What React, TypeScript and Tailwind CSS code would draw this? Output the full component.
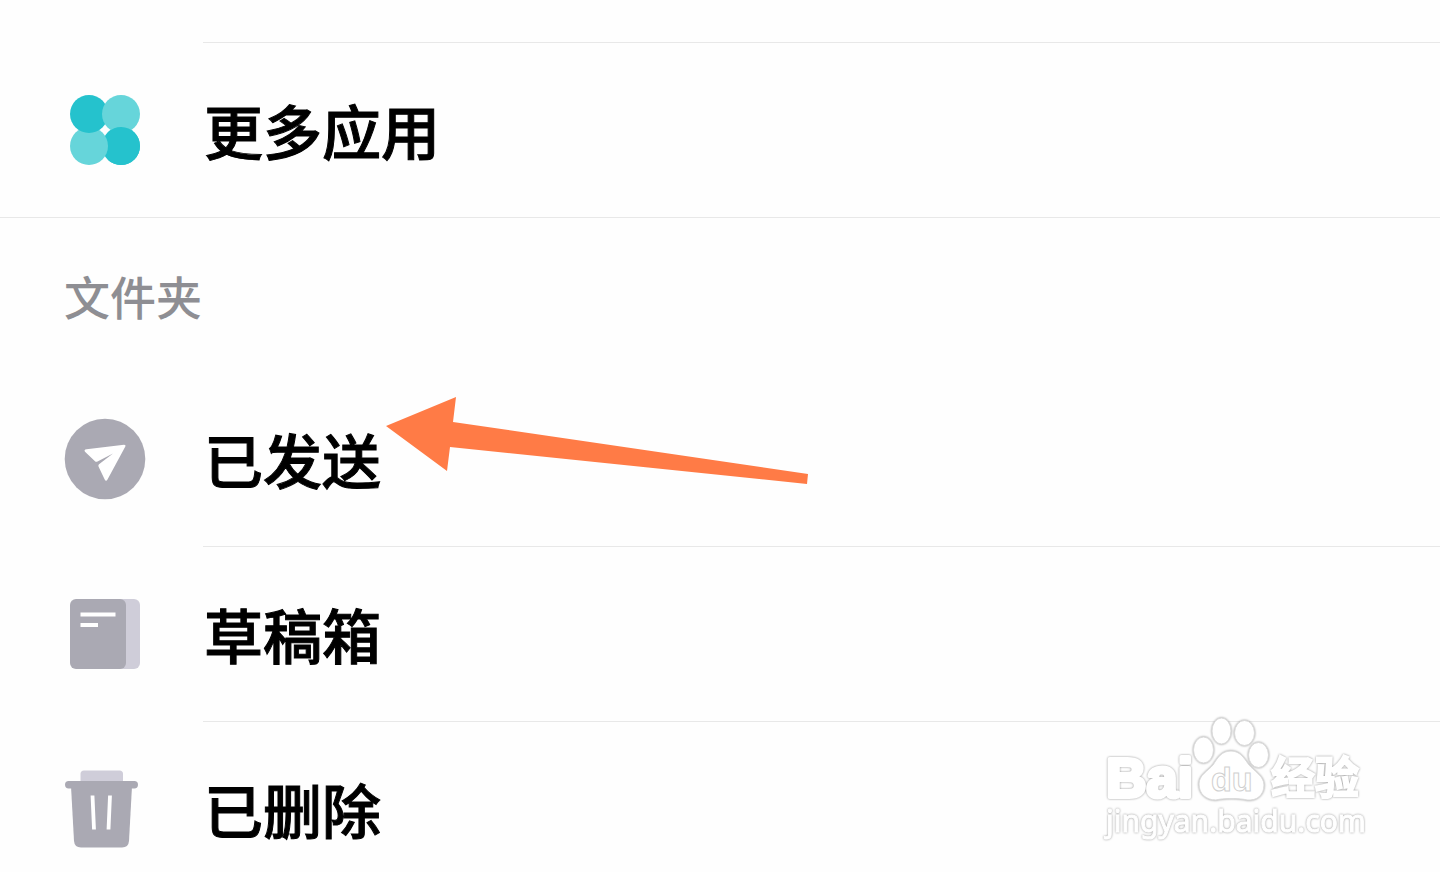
import type { ReactNode } from "react"

function AppsIcon() {
  return (
    <svg viewBox="0 0 82 82" className="size-[82px] shrink-0" aria-hidden="true">
      <circle cx="57" cy="57" r="19" fill="#25c2cd" />
      <circle cx="25" cy="57" r="19" fill="#66d5da" />
      <circle cx="25" cy="25" r="19" fill="#25c2cd" />
      <circle cx="57" cy="25" r="19" fill="#66d5da" />
      {/* right part again, so that each circle laps over the next one */}
      <path d="M44 43.100A19 19 0 1 1 44 70.900z" fill="#25c2cd" />
    </svg>
  )
}

function SentIcon() {
  return (
    <svg viewBox="0 0 82 82" className="size-[82px] shrink-0" aria-hidden="true">
      <circle cx="41" cy="41" r="40.300" fill="#aaa9b3" />
      <path
        d="M22.500 31.300 60 26.800q2.200 0 1.200 2L43.500 61.500q-1.500 2.500-2.800 0L34.500 48.500q-.5-1.200.5-2.200L49 35.500 33.500 43.500q-1.500.7-2.500-.3L21 33.800q-1.500-2 1.500-2.500z"
        fill="#fff"
      />
    </svg>
  )
}

function DraftsIcon() {
  return (
    <svg viewBox="0 0 82 82" className="size-[82px] shrink-0" aria-hidden="true">
      <rect x="30" y="6" width="46" height="70" rx="6" fill="#cfcdd9" />
      <rect x="6" y="6" width="56" height="70" rx="6" fill="#aaa9b3" />
      <path d="M16.500 21.500h35M16.500 32h17.500" stroke="#fff" strokeWidth="4" />
    </svg>
  )
}

function TrashIcon() {
  return (
    <svg viewBox="0 0 82 82" className="size-[82px] shrink-0" aria-hidden="true">
      <path d="M16.500 14V6q0-3.500 3.500-3.500h35.500q3.500 0 3.500 3.500v8z" fill="#cfcdd9" />
      <rect x="1" y="13" width="73" height="7.500" rx="3.700" fill="#aaa9b3" />
      <path d="M7 18h61l-3 55q-.5 6.500-7 6.500H17q-6.500 0-7-6.500z" fill="#aaa9b3" />
      <path d="M28.500 27.500 30 61.500M46 27.500 44.500 61.500" stroke="#fff" strokeWidth="3.800" />
    </svg>
  )
}

function Row({ icon, label, inset = true }: { icon: ReactNode; label: string; inset?: boolean }) {
  return (
    <li>
      <button type="button" className="flex h-[174px] w-full items-center gap-[58px] pl-16 text-left">
        {icon}
        <span className="text-[59px] font-medium [-webkit-text-stroke:1px_black]">{label}</span>
      </button>
      <div className={inset ? "ml-[203px] h-px bg-[#e8e8e8]" : "h-px bg-[#e8e8e8]"} />
    </li>
  )
}

function Arrow() {
  return (
    <svg viewBox="0 0 422 88" className="pointer-events-none absolute top-6 left-[386px] w-[422px]" aria-hidden="true">
      <path d="M0 30 70 1l-3 25 355 52-1 10L64 51l-3 24z" fill="#ff7b46" />
    </svg>
  )
}

const halo = "[filter:drop-shadow(0_0_1px_#999)]"

function Watermark() {
  return (
    <svg
      viewBox="0 0 290 150"
      className="pointer-events-none absolute right-[60px] bottom-[22px] w-[290px]"
      fill="#fff"
      stroke="#fff"
    >
      <g className={halo} stroke="#dcdcdc">
        <ellipse cx="113.500" cy="50" rx="10" ry="13" />
        <ellipse cx="131.500" cy="31" rx="9.500" ry="13" />
        <ellipse cx="154.500" cy="33" rx="10" ry="12.500" />
        <ellipse cx="168.500" cy="55" rx="10" ry="12.500" />
        <path d="M141 51c9 0 13 7 18 14 5 6 15 11 15 20 0 10-7 16-17 15-7-2-24-2-31 0-10 0-17-6-17-16 0-9 9-13 14-19 5-8 9-14 18-14z" />
      </g>
      <text x="16" y="97" strokeWidth="4" strokeLinejoin="round" className={`font-['Liberation_Sans'] text-[56px] font-bold ${halo}`}>
        Bai
      </text>
      <text x="121" y="91" stroke="#d0d0d0" strokeWidth="1" className="font-['Liberation_Sans'] text-[34px] font-bold">
        du
      </text>
      <text x="181" y="94" strokeWidth="2" className={`font-['Noto_Sans_CJK_SC'] text-[44px] font-bold ${halo}`}>
        经验
      </text>
      <text x="16" y="132" strokeWidth="1" className={`font-['Noto_Sans'] text-[30px] ${halo}`}>
        jingyan.baidu.com
      </text>
    </svg>
  )
}

export default function App() {
  return (
    <main className="relative h-screen overflow-hidden bg-[#fefefe] font-['Noto_Sans_CJK_SC',sans-serif] text-black">
      <div className="ml-[203px] h-[43px] border-b border-[#e8e8e8]" />
      <ul>
        <Row icon={<AppsIcon />} label="更多应用" inset={false} />
      </ul>
      <h2 className="flex h-[154px] items-center pl-16 text-[46px] font-medium text-[#8e8e93]">文件夹</h2>
      <div className="relative">
        <ul>
          <Row icon={<SentIcon />} label="已发送" />
          <Row icon={<DraftsIcon />} label="草稿箱" />
          <Row icon={<TrashIcon />} label="已删除" />
        </ul>
        <Arrow />
      </div>
      <Watermark />
    </main>
  )
}
